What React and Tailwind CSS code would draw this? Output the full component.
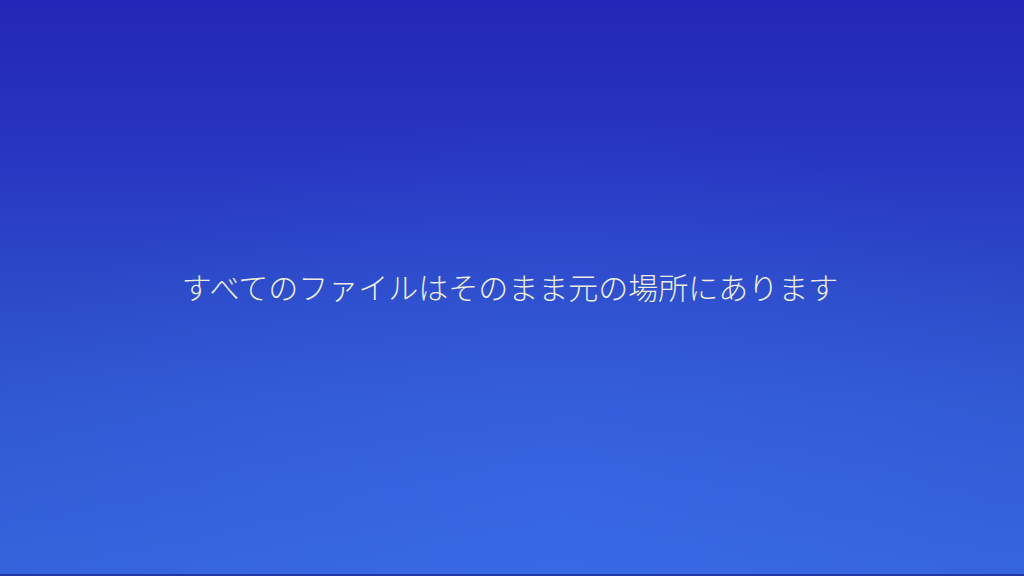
export default function App() {
  return (
    <div className="w-[1024px] h-[576px] flex flex-col bg-[linear-gradient(to_bottom,#2326b6_0%,#2838c2_30%,#2c4ac8_50%,#3058d2_70%,#3464dc_100%)]">
      <div className="flex-1 flex items-center justify-center bg-[radial-gradient(ellipse_60%_70%_at_55%_90%,rgba(70,120,255,0.28)_0%,rgba(70,120,255,0)_100%)]">
        <p className="text-[30px] leading-none font-extralight text-[#ececdf] font-['Noto_Sans_CJK_JP','Noto_Sans',sans-serif] mt-[-2px] ml-[-4px]">
          すべてのファイルはそのまま元の場所にあります
        </p>
      </div>
      <div className="h-[2px] bg-[#2238a8]" />
    </div>
  );
}
